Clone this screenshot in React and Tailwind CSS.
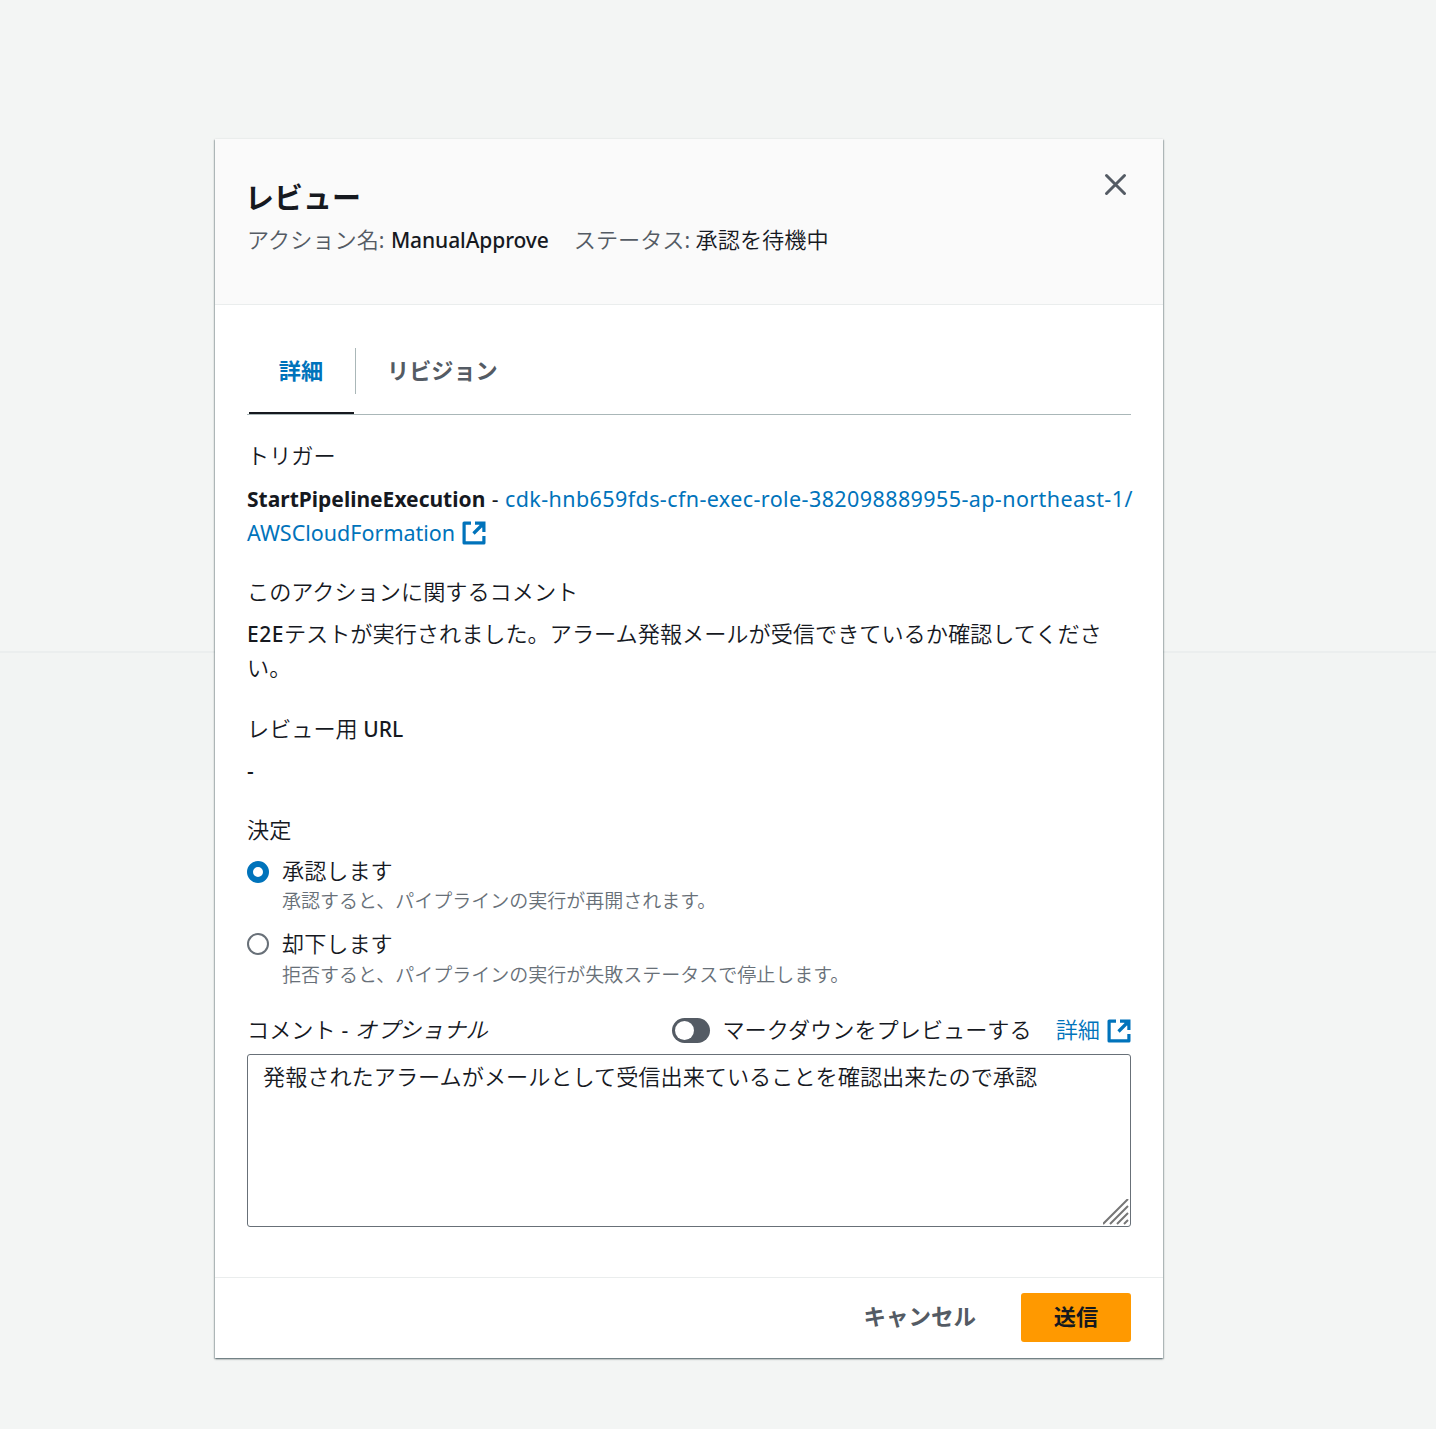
import React from "react";

const En = ({ children, weight = "font-normal", size = "text-[21px]", className = "" }) => (
  <span className={`font-['Noto_Sans','Noto_Sans_CJK_JP',sans-serif] ${size} ${weight} ${className}`}>{children}</span>
);

const ExternalIcon = ({ className = "" }) => (
  <svg width="24" height="24" viewBox="0 0 24 24" fill="none" stroke="#0073bb" strokeWidth="3.2" className={className}>
    <path d="M9 2.1H2.1V21.9H21.9V15" strokeLinejoin="round" />
    <path d="M13 2.1H21.9V11M21.5 2.5L11.5 12.5" />
    <path d="M17 3L21 7V3Z" fill="#0073bb" stroke="none" />
  </svg>
);

const Line = ({ children, className = "", leading = "leading-[30px]" }) => (
  <div className={`h-[34px] whitespace-nowrap ${leading} ${className}`}>{children}</div>
);

const Radio = ({ checked, label, description, className = "", descriptionLeading = "leading-[24px]" }) => (
  <div className={`flex ${className}`}>
    {checked ? (
      <span className="mt-[7px] h-[22px] w-[22px] shrink-0 rounded-full border-[6px] border-[#0073bb] bg-white" />
    ) : (
      <span className="mt-[6px] h-[22px] w-[22px] shrink-0 rounded-full border-2 border-[#687078] bg-white" />
    )}
    <div className="ml-[13px]">
      <Line>{label}</Line>
      <div className={`h-[26px] text-[19px] text-[#687078] ${descriptionLeading}`}>{description}</div>
    </div>
  </div>
);

export default function App() {
  return (
    <div className="grid h-[1429px] w-[1436px] overflow-hidden bg-[#f3f5f4] font-['Noto_Sans_CJK_JP',sans-serif] text-[22.17px] font-[350] text-[#16191f]">
      <div className="col-start-1 row-start-1 pt-[651px]">
        <div className="h-[129px] border-t-2 border-[#ebeeee] bg-[#f2f4f3]" />
      </div>

      <div className="z-10 col-start-1 row-start-1 ml-[215px] mt-[139px] h-[1219px] w-[948px] bg-white shadow-[0_1px_2px_0_rgba(0,28,36,0.5),1px_1px_1px_0_rgba(0,28,36,0.15),-1px_1px_1px_0_rgba(0,28,36,0.15)]">
        <header className="flex h-[166px] justify-between border-b border-[#eaeded] bg-[#fafafa] pl-8 pr-[36px]">
          <div className="pt-[40px]">
            <h1 className="-ml-[2px] h-[36px] text-[29px] font-bold leading-[35px]">レビュー</h1>
            <div className="mt-[8px] flex">
              <Line>
                <span className="text-[#545b64]">アクション名<En>:&nbsp;</En></span>
                <En weight="font-medium" className="ml-px tracking-[-0.1px]">ManualApprove</En>
              </Line>
              <Line className="ml-[25px]">
                <span className="text-[#545b64]">ステータス<En>:&nbsp;</En></span>
                承認を待機中
              </Line>
            </div>
          </div>
          <svg width="23" height="23" viewBox="0 0 23 23" className="mt-[34px]" fill="none" stroke="#545b64" strokeWidth="3" strokeLinecap="round">
            <path d="M2.5 2.5L20.5 20.5M20.5 2.5L2.5 20.5" />
          </svg>
        </header>

        <main className="px-8 pt-[33px]">
          <div className="flex h-[77px] border-b border-[#aab7b8] pl-[2px] font-bold">
            <div className="flex w-[105px] justify-center border-b-2 border-[#16191f] pr-px pt-[15px] text-[#0073bb]"><Line leading="leading-[32px]">詳細</Line></div>
            <div className="ml-px mt-[10px] h-[46px] w-px bg-[#aab7b8]" />
            <div className="ml-[31px] pt-[15px] text-[#545b64]"><Line leading="leading-[32px]">リビジョン</Line></div>
          </div>

          <Line className="mt-[24px]">トリガー</Line>
          <Line leading="leading-[32px]" className="mt-2">
            <En weight="font-bold">StartPipelineExecution</En>
            <En className="mx-px">&nbsp;-&nbsp;</En>
            <En size="text-[21.5px]" className="tracking-[0.41px] text-[#0073bb]">cdk-hnb659fds-cfn-exec-role-382098889955-ap-northeast-1/</En>
          </Line>
          <div className="flex items-start">
            <Line leading="leading-[32px]"><En size="text-[21.5px]" className="text-[#0073bb]">AWSCloudFormation</En></Line>
            <ExternalIcon className="ml-[7px] mt-[6px]" />
          </div>

          <Line className="mt-[26px]">このアクションに関するコメント</Line>
          <Line className="mt-2"><En weight="font-medium" className="tracking-[0.5px]">E2E</En>テストが実行されました。アラーム発報メールが受信できているか確認してくださ</Line>
          <Line>い。</Line>

          <Line className="mt-[27px]">レビュー用<En weight="font-medium">&nbsp;URL</En></Line>
          <Line className="mt-2"><En weight="font-medium">-</En></Line>

          <Line className="mt-[25px]">決定</Line>
          <Radio checked className="mt-[7px]" label="承認します" description="承認すると、パイプラインの実行が再開されます。" />
          <Radio className="mt-[13px]" descriptionLeading="leading-[26px]" label="却下します" description="拒否すると、パイプラインの実行が失敗ステータスで停止します。" />

          <div className="mt-[26px] flex h-[34px] items-center">
            <Line>コメント<En className="tracking-[0.5px]"> - </En><i>オプショナル</i></Line>
            <div className="ml-auto flex h-[25px] w-[38px] items-center rounded-full bg-[#545b64] pl-[3px]">
              <div className="h-[19px] w-[19px] rounded-full bg-white" />
            </div>
            <Line className="ml-[12px]">マークダウンをプレビューする</Line>
            <Line className="ml-[24px] text-[#0073bb]">詳細</Line>
            <ExternalIcon className="ml-[7px] mt-px" />
          </div>

          <div className="relative mt-[7px] h-[173px]">
            <textarea
              className="block h-full w-full resize-none rounded-[3px] border border-[#687078] bg-white px-[15px] py-[3px] leading-[34px] outline-none"
              defaultValue="発報されたアラームがメールとして受信出来ていることを確認出来たので承認"
            />
            <svg width="26" height="26" viewBox="0 0 26 26" className="absolute bottom-[2px] right-[2px]" stroke="#767676" strokeWidth="2">
              <path d="M0 25L25 0M7 25L25 7M14 25L25 14M21 25L25 21" />
            </svg>
          </div>
        </main>

        <footer className="mt-[50px] flex h-[81px] items-start justify-end border-t border-[#eaeded] pr-8 pt-[15px] font-bold">
          <button className="h-[49px] pb-[4px] text-[22.5px] leading-[45px] text-[#545b64]">キャンセル</button>
          <button className="ml-[45px] h-[49px] w-[110px] rounded-[3px] bg-[#ff9900] pb-[4px] leading-[45px]">送信</button>
        </footer>
      </div>
    </div>
  );
}
